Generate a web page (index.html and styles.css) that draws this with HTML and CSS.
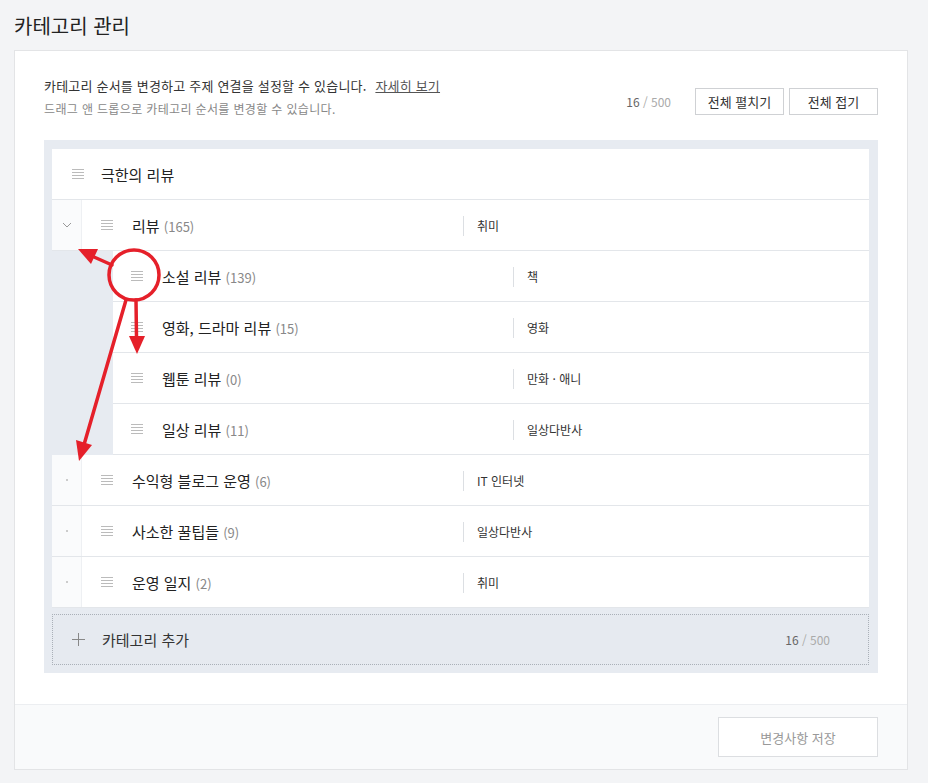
FILE: index.html
```html
<!DOCTYPE html>
<html lang="ko">
<head>
    <meta charset="UTF-8">
    <title>카테고리 관리</title>
    <link rel="stylesheet" href="styles.css">
</head>
<body>

<h2 class="page-title">카테고리 관리</h2>

<div class="panel">
    <div class="panel-body">
        <div class="head">
            <div class="desc">
                <p class="desc-main">카테고리 순서를 변경하고 주제 연결을 설정할 수 있습니다. <a href="#" class="more">자세히 보기</a></p>
                <p class="desc-sub">드래그 앤 드롭으로 카테고리 순서를 변경할 수 있습니다.</p>
            </div>
            <div class="actions">
                <span class="count"><b>16</b> / 500</span>
                <button class="btn">전체 펼치기</button>
                <button class="btn">전체 접기</button>
            </div>
        </div>

        <div class="list-wrap">
            <div class="list">
                <div class="row solo">
                    <span class="handle"></span>
                    <span class="name">극한의 리뷰</span>
                </div>

                <div class="row top">
                    <span class="gutter">
                        <svg width="10" height="6" viewBox="0 0 10 6"><polyline points="1,1 5,5 9,1" fill="none" stroke="#999" stroke-width="1"/></svg>
                    </span>
                    <span class="handle"></span>
                    <span class="name">리뷰 <em>(165)</em></span>
                    <span class="topic">취미</span>
                </div>

                <div class="children">
                    <div class="row child">
                        <span class="handle"></span>
                        <span class="name">소설 리뷰 <em>(139)</em></span>
                        <span class="topic">책</span>
                    </div>
                    <div class="row child">
                        <span class="handle"></span>
                        <span class="name">영화, 드라마 리뷰 <em>(15)</em></span>
                        <span class="topic">영화</span>
                    </div>
                    <div class="row child">
                        <span class="handle"></span>
                        <span class="name">웹툰 리뷰 <em>(0)</em></span>
                        <span class="topic">만화 · 애니</span>
                    </div>
                    <div class="row child">
                        <span class="handle"></span>
                        <span class="name">일상 리뷰 <em>(11)</em></span>
                        <span class="topic">일상다반사</span>
                    </div>
                </div>

                <div class="row top">
                    <span class="gutter"><i class="dot"></i></span>
                    <span class="handle"></span>
                    <span class="name">수익형 블로그 운영 <em>(6)</em></span>
                    <span class="topic">IT 인터넷</span>
                </div>
                <div class="row top">
                    <span class="gutter"><i class="dot"></i></span>
                    <span class="handle"></span>
                    <span class="name">사소한 꿀팁들 <em>(9)</em></span>
                    <span class="topic">일상다반사</span>
                </div>
                <div class="row top">
                    <span class="gutter"><i class="dot"></i></span>
                    <span class="handle"></span>
                    <span class="name">운영 일지 <em>(2)</em></span>
                    <span class="topic">취미</span>
                </div>
            </div>

            <div class="add-row">
                <span class="plus"></span>
                <span class="add-label">카테고리 추가</span>
                <span class="count"><b>16</b> / 500</span>
            </div>
        </div>
    </div>

    <div class="panel-foot">
        <button class="btn-save">변경사항 저장</button>
    </div>
</div>

<!-- red guide marks drawn over the screenshot -->
<svg class="marks" width="928" height="783" viewBox="0 0 928 783">
    <g stroke="#e5202a" stroke-width="3.5" fill="none" stroke-linecap="round">
        <circle cx="134" cy="275" r="25"/>
        <line x1="112" y1="265" x2="94" y2="257"/>
        <line x1="136" y1="300" x2="136.5" y2="338"/>
        <line x1="126" y1="300" x2="84.5" y2="443"/>
    </g>
    <g fill="#e5202a">
        <polygon points="78,249 98,249 91,264"/>
        <polygon points="137,354 145,336 129,336"/>
        <polygon points="79,461 92,445 76,440"/>
    </g>
</svg>

</body>
</html>
```

FILE: styles.css
```css
        body {
            margin: 0;
            background: #f3f4f6;
            font-family: "Noto Sans CJK KR", "Noto Sans", sans-serif;
            color: #222;
            position: relative;
        }

        .page-title {
            margin: 0;
            padding: 12px 14px 0;
            font-size: 20px;
            line-height: 28px;
            font-weight: 400;
            color: #222;
        }

        .panel {
            margin: 10px 0 0 14px;
            width: 892px;
            background: #fff;
            border: 1px solid #e3e4e6;
        }

        .panel-body {
            padding: 25px 29px 31px;
        }

        .head {
            display: flex;
            justify-content: space-between;
            align-items: flex-end;
            margin-bottom: 21px;
        }

		.desc p {
			margin: 0;
		}

        .desc-main {
            font-size: 13px;
            line-height: 20px;
            letter-spacing: 0.2px;
            color: #333;
        }

        .more {
            margin-left: 5px;
            color: #555;
            text-decoration: underline;
        }

        .desc-sub {
            margin-top: 3px !important;
            font-size: 12px;
            line-height: 20px;
            letter-spacing: 0.35px;
            color: #888;
        }

        .actions {
            display: flex;
            align-items: center;
            margin-bottom: 4px;
        }

        .count {
            font-size: 12px;
            color: #aaa;
            margin-right: 19px;
        }

        .count b {
            font-weight: normal;
            color: #666;
        }

        .btn {
            width: 89px;
            height: 27px;
            margin-left: 5px;
            background: #fff;
            border: 1px solid #cfd1d4;
            font-family: inherit;
            font-size: 13px;
            color: #333;
            padding: 0;
        }

        .list-wrap {
            background: #e7ebf1;
            padding: 9px 9px 8px 8px;
        }

        .list {
            display: flex;
            flex-direction: column;
        }

        .row {
            display: flex;
            align-items: center;
            height: 50px;
            background: #fff;
            border-bottom: 1px solid #e3e6ea;
        }

        .gutter {
            width: 29px;
            height: 100%;
            display: flex;
            align-items: center;
            justify-content: center;
            background: #fafbfc;
            border-right: 1px solid #eef0f3;
        }

        .dot {
            width: 2px;
            height: 2px;
            background: #ccc;
        }

        .handle {
            width: 12px;
            height: 10px;
            margin: 0 19px 0 19px;
            background: repeating-linear-gradient(#bbb 0 1px, transparent 1px 3px);
        }

        .solo .handle {
            margin-left: 20px;
            margin-right: 17px;
        }

        .name {
            font-size: 15px;
            color: #222;
        }

        .top .name {
            width: 331px;
        }

        .child .name {
            width: 351px;
        }

        .name em {
            font-style: normal;
            font-size: 13px;
            color: #888;
        }

        .topic {
            position: relative;
            padding-left: 14px;
            font-size: 12px;
            color: #333;
        }

        .topic:before {
            content: "";
            position: absolute;
            left: 0;
            top: -1px;
            width: 1px;
            height: 20px;
            background: #dcdfe3;
        }

        .children {
            padding-left: 61px;
        }

        .child .handle {
            margin-left: 18px;
        }

        .add-row {
            display: flex;
            align-items: center;
            height: 49px;
            margin-top: 6px;
            border: 1px dotted #aab0b8;
            background: #e6eaf0;
            padding: 0 38px 0 19px;
        }

        .plus {
            position: relative;
            width: 13px;
            height: 13px;
            margin-right: 17px;
        }

        .plus:before, .plus:after {
            content: "";
            position: absolute;
            background: #888;
        }

        .plus:before {
            left: 0;
            top: 6px;
            width: 13px;
            height: 1px;
        }

        .plus:after {
            left: 6px;
            top: 0;
            width: 1px;
            height: 13px;
        }

        .add-label {
            flex: 1;
            font-size: 15px;
            color: #333;
        }

        .add-row .count {
            margin-right: 0;
        }

        .panel-foot {
            display: flex;
            justify-content: flex-end;
            height: 65px;
            padding: 12px 29px 0 0;
            box-sizing: border-box;
            background: #f9fafb;
            border-top: 1px solid #eceef1;
        }

        .btn-save {
            width: 160px;
            height: 40px;
            background: #fff;
            border: 1px solid #dcdee1;
            font-family: inherit;
            font-size: 13px;
            color: #999;
        }

        .marks {
            position: absolute;
            left: 0;
            top: 0;
            pointer-events: none;
        }
```
